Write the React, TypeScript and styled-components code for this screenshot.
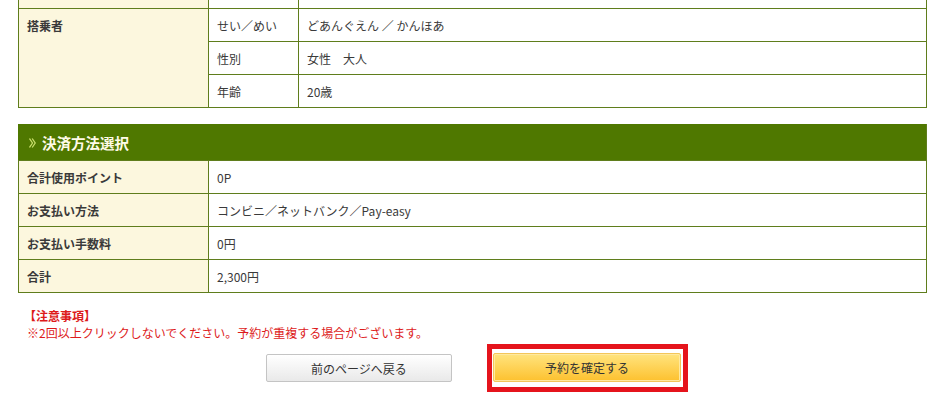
import React from "react";
import styled, { createGlobalStyle } from "styled-components";

const GlobalStyle = createGlobalStyle`
  html, body { margin: 0; padding: 0; background: #ffffff; }
  body {
    font-family: "Noto Sans CJK JP", "Noto Sans", sans-serif;
    font-size: 12px;
    color: #333333;
  }
`;

const BORDER = "#5f7d1c";
const LABEL_BG = "#fcf7de";

const Page = styled.div`
  width: 928px;
  display: flex;
  flex-direction: column;
`;

const Grid = styled.div<{ $cols: string; $mt?: number }>`
  display: grid;
  grid-template-columns: ${(p) => p.$cols};
  margin: ${(p) => p.$mt ?? 0}px 1px 0 18px;
  border-left: 1px solid ${BORDER};
`;

const Cell = styled.div<{ $label?: boolean; $h?: number; $span?: number; $top?: boolean; $bold?: boolean }>`
  box-sizing: border-box;
  height: ${(p) => (p.$span ? "auto" : `${p.$h ?? 33}px`)};
  ${(p) => (p.$span ? `grid-row: span ${p.$span};` : "")}
  background: ${(p) => (p.$label ? LABEL_BG : "#ffffff")};
  border-right: 1px solid ${BORDER};
  border-bottom: 1px solid ${BORDER};
  display: flex;
  align-items: ${(p) => (p.$top ? "flex-start" : "center")};
  padding: ${(p) => (p.$top ? "8px 8px 0" : "0 8px")};
  line-height: 17px;
  font-size: 12px;
  font-weight: ${(p) => (p.$bold ? 700 : 400)};
  color: #3a3a3a;
  white-space: nowrap;
`;

const Header = styled.div`
  grid-column: 1 / -1;
  box-sizing: border-box;
  height: 37px;
  background: #4f7800;
  border-right: 1px solid ${BORDER};
  border-bottom: 1px solid ${BORDER};
  margin-left: -1px;
  padding-left: 11px;
  display: flex;
  align-items: center;
  gap: 6px;
  color: #fffbe8;
  font-size: 14.5px;
  font-weight: 700;
`;

const ArrowIcon = styled.svg`
  margin-top: 2px;
  flex: none;
`;

const Arrow = () => (
  <ArrowIcon width="7" height="10" viewBox="0 0 7 10" aria-hidden="true">
    <path d="M0.5 0.5 L3.5 5 L0.5 9.5" fill="none" stroke="#c9de6a" strokeWidth="1.3" />
    <path d="M3.2 0.5 L6.2 5 L3.2 9.5" fill="none" stroke="#c9de6a" strokeWidth="1.3" />
  </ArrowIcon>
);

const Notice = styled.div`
  margin: 14px 0 0 27px;
  color: #dd1a1a;
  font-size: 12px;
  line-height: 17px;
`;

const NoticeTitle = styled.div`
  font-weight: 700;
  margin-left: -3px;
`;

const ButtonRow = styled.div`
  display: flex;
  align-items: center;
  gap: 35px;
  padding-left: 266px;
  margin-top: 3px;
`;

const BackButton = styled.button`
  box-sizing: border-box;
  width: 186px;
  height: 28px;
  border: 1px solid #c4c4c4;
  border-radius: 2px;
  background: linear-gradient(#ffffff, #e9e9e9);
  font-family: inherit;
  font-size: 12px;
  color: #333333;
  cursor: pointer;
  padding: 0;
`;

const Highlight = styled.div`
  border: 5px solid #e5141c;
  padding: 4px 2px 5px 1px;
  display: flex;
`;

const ConfirmButton = styled.button`
  box-sizing: border-box;
  width: 188px;
  height: 29px;
  border: 1px solid #f3c65a;
  border-radius: 2px;
  background: linear-gradient(#ffe47e, #fdc12f);
  box-shadow: inset 0 0 0 1px #ffe9a0;
  font-family: inherit;
  font-size: 12px;
  color: #333333;
  cursor: pointer;
  padding: 0;
`;

export default function App() {
  return (
    <Page>
      <GlobalStyle />
      <Grid $cols="190px 90px 1fr">
        <Cell $label $h={9} />
        <Cell $h={9} />
        <Cell $h={9} />
        <Cell $label $span={3} $top $bold>搭乗者</Cell>
        <Cell>せい／めい</Cell>
        <Cell>どあんぐえん ／ かんほあ</Cell>
        <Cell>性別</Cell>
        <Cell>女性　大人</Cell>
        <Cell>年齢</Cell>
        <Cell>20歳</Cell>
      </Grid>

      <Grid $cols="190px 1fr" $mt={16}>
        <Header>
          <Arrow />
          決済方法選択
        </Header>
        <Cell $label $bold>合計使用ポイント</Cell>
        <Cell>0P</Cell>
        <Cell $label $bold>お支払い方法</Cell>
        <Cell>コンビニ／ネットバンク／Pay-easy</Cell>
        <Cell $label $bold>お支払い手数料</Cell>
        <Cell>0円</Cell>
        <Cell $label $bold>合計</Cell>
        <Cell>2,300円</Cell>
      </Grid>

      <Notice>
        <NoticeTitle>【注意事項】</NoticeTitle>
        <div>※2回以上クリックしないでください。予約が重複する場合がございます。</div>
      </Notice>

      <ButtonRow>
        <BackButton>前のページへ戻る</BackButton>
        <Highlight>
          <ConfirmButton>予約を確定する</ConfirmButton>
        </Highlight>
      </ButtonRow>
    </Page>
  );
}
